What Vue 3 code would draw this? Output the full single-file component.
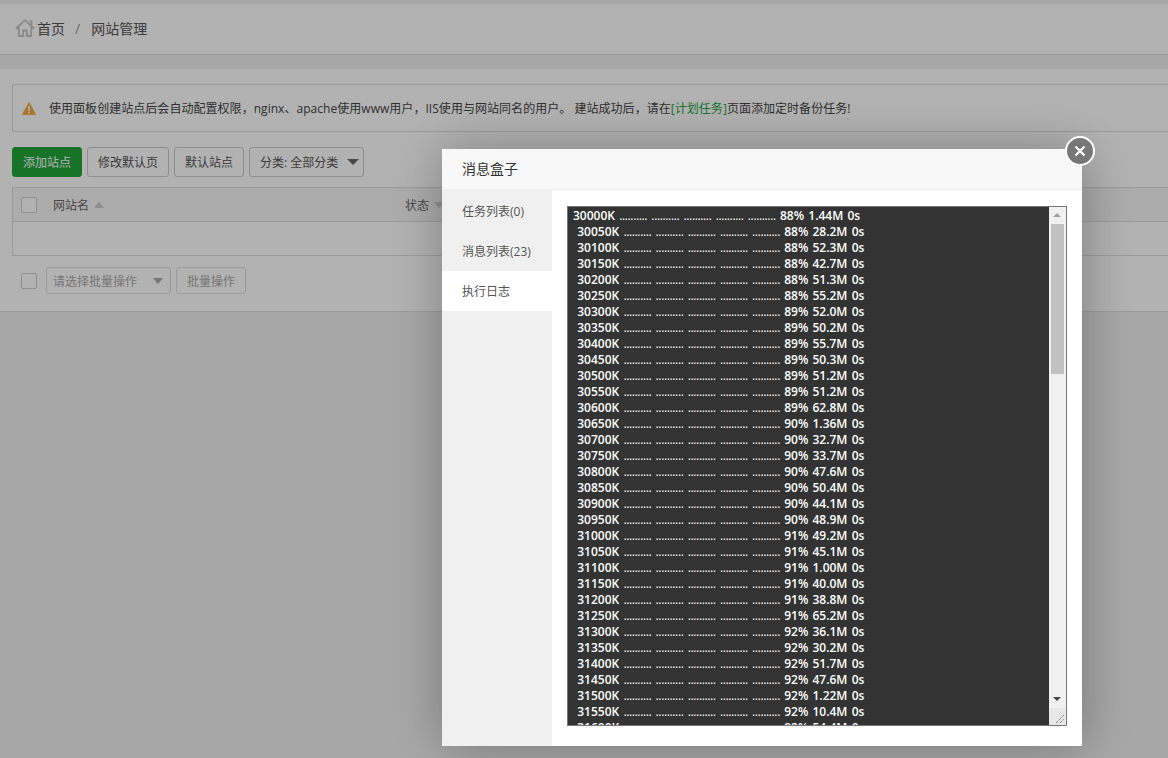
<script setup>
const rows = [
  ['30000K', '88%', '1.44M'], ['30050K', '88%', '28.2M'], ['30100K', '88%', '52.3M'], ['30150K', '88%', '42.7M'],
  ['30200K', '88%', '51.3M'], ['30250K', '88%', '55.2M'], ['30300K', '89%', '52.0M'], ['30350K', '89%', '50.2M'],
  ['30400K', '89%', '55.7M'], ['30450K', '89%', '50.3M'], ['30500K', '89%', '51.2M'], ['30550K', '89%', '51.2M'],
  ['30600K', '89%', '62.8M'], ['30650K', '90%', '1.36M'], ['30700K', '90%', '32.7M'], ['30750K', '90%', '33.7M'],
  ['30800K', '90%', '47.6M'], ['30850K', '90%', '50.4M'], ['30900K', '90%', '44.1M'], ['30950K', '90%', '48.9M'],
  ['31000K', '91%', '49.2M'], ['31050K', '91%', '45.1M'], ['31100K', '91%', '1.00M'], ['31150K', '91%', '40.0M'],
  ['31200K', '91%', '38.8M'], ['31250K', '91%', '65.2M'], ['31300K', '92%', '36.1M'], ['31350K', '92%', '30.2M'],
  ['31400K', '92%', '51.7M'], ['31450K', '92%', '47.6M'], ['31500K', '92%', '1.22M'], ['31550K', '92%', '10.4M'],
  ['31600K', '92%', '54.4M']
]
const dots = '..........'
const tabs = ['任务列表(0)', '消息列表(23)', '执行日志']
</script>

<template>
  <div class="page">
    <header class="crumbs">
      <svg class="home" viewBox="0 0 20 18" width="20" height="18">
        <path d="M1 9.5 10 1.2l9 8.3M3.8 7.5V17h4.4v-5.5h3.6V17h4.4V7.5M14.5 2.5h2v3.4" fill="none" stroke="#c6c6c6" stroke-width="1.8" />
      </svg>
      <span class="crumb">首页</span>
      <span class="sep">/</span>
      <span class="crumb">网站管理</span>
    </header>

    <main class="card">
      <div class="alert">
        <svg class="warn" viewBox="0 0 14 13" width="14" height="13">
          <path d="M7 .5 13.6 12.6H.4z" fill="#f0a63c" stroke="#f0a63c" stroke-width=".8" stroke-linejoin="round" />
          <path d="M6.2 4h1.6v5H6.2zM6.2 9.8h1.6v1.6H6.2z" fill="#fff" />
        </svg>
        <span>使用面板创建站点后会自动配置权限，nginx、apache使用www用户，IIS使用与网站同名的用户。 建站成功后，请在<a class="link">[计划任务]</a>页面添加定时备份任务!</span>
      </div>

      <div class="toolbar">
        <button class="btn primary">添加站点</button>
        <button class="btn">修改默认页</button>
        <button class="btn">默认站点</button>
        <button class="btn category">分类: 全部分类<i class="caret dark"></i></button>
      </div>

      <div class="table">
        <div class="thead">
          <span class="check"></span>
          <span class="col-name">网站名<i class="sort-up"></i></span>
          <span class="col-status">状态<i class="sort-down"></i></span>
        </div>
        <div class="tbody"></div>
      </div>

      <div class="batch">
        <span class="check"></span>
        <div class="batch-select">请选择批量操作<i class="caret"></i></div>
        <button class="btn disabled">批量操作</button>
      </div>
    </main>

    <div class="shade"></div>

    <section class="modal">
      <div class="modal-title">消息盒子</div>
      <div class="modal-body">
        <ul class="tabs">
          <li v-for="(tab, i) in tabs" :key="tab" :class="{ on: i === 2 }">{{ tab }}</li>
        </ul>
        <div class="content">
          <div class="log">
            <pre class="lines"><div v-for="(r, i) in rows" :key="r[0]">{{ i === 0 ? '' : ' ' }}{{ r[0] }} <span class="dots">{{ dots }}</span> <span class="dots">{{ dots }}</span> <span class="dots">{{ dots }}</span> <span class="dots">{{ dots }}</span> <span class="dots">{{ dots }}</span> <span class="pct">{{ r[1] }}</span> {{ r[2] }} 0s</div></pre>
            <div class="scrollbar">
              <i class="arrow up"></i>
              <div class="thumb"></div>
              <i class="arrow down"></i>
              <div class="corner">
                <svg viewBox="0 0 10 10" width="10" height="10">
                  <path d="M1 9 9 1M5 9 9 5" stroke="#5c4a66" stroke-width="1" stroke-dasharray="1 1" fill="none" />
                </svg>
              </div>
            </div>
          </div>
        </div>
      </div>
      <button class="close" aria-label="close">
        <svg viewBox="0 0 12 12" width="12" height="12">
          <path d="M1.5 1.5l9 9M10.5 1.5l-9 9" stroke="#fff" stroke-width="2.2" />
        </svg>
      </button>
    </section>
  </div>
</template>

<style scoped>
.page {
  height: 758px;
  overflow: hidden;
  padding-top: 4px;
  box-sizing: border-box;
  background: #f0f0f0;
  color: #333;
  font-size: 12px;
  font-family: "Open Sans", "Noto Sans CJK SC", sans-serif;
}

.crumbs {
  display: flex;
  align-items: center;
  height: 51px;
  padding: 0 0 2px 15px;
  box-sizing: border-box;
  background: #fff;
  border-bottom: 1px solid #ddd;
  font-size: 14px;
}

.home {
  margin-right: 2px;
}

.crumb {
  color: #555;
}

.sep {
  margin: 0 11px 0 10px;
  color: #999;
}

.card {
  margin-top: 14px;
  padding: 15px 0 17px 12px;
  background: #fff;
  border-bottom: 1px solid #ddd;
  width: 1300px;
}

.alert {
  display: flex;
  align-items: center;
  height: 46px;
  padding-left: 9px;
  border: 1px solid #ddd;
  background: #fff;
  color: #444;
  letter-spacing: 0.04px;
}

.warn {
  margin-right: 13px;
}

.link {
  color: #20a53a;
}

.toolbar {
  display: flex;
  gap: 5px;
  margin-top: 15px;
}

.btn {
  height: 30px;
  padding: 0 10px;
  border: 1px solid #ccc;
  border-radius: 3px;
  background: #fff;
  color: #555;
  font: inherit;
}

.primary {
  width: 70px;
  background: #20a53a;
  border-color: #20a53a;
  color: #fff;
}

.category {
  display: flex;
  align-items: center;
  padding-right: 4px;
}

.caret {
  display: block;
  width: 0;
  height: 0;
  border: 5.5px solid transparent;
  border-bottom: 0;
  border-top: 6px solid #aaa;
}

.caret.dark {
  margin-left: 9px;
  border-width: 6px 6px 0;
  border-top-color: #666;
  border-top-style: solid;
}

.table {
  margin-top: 10px;
  border: 1px solid #ddd;
}

.thead {
  display: flex;
  align-items: center;
  height: 33px;
  padding-left: 8px;
  background: #f6f6f6;
  border-bottom: 1px solid #ddd;
  color: #666;
}

.tbody {
  height: 33px;
}

.check {
  display: block;
  flex: none;
  width: 14px;
  height: 14px;
  border: 1px solid #ccc;
  border-radius: 2px;
  background: #fff;
}

.col-name {
  display: flex;
  align-items: center;
  margin-left: 16px;
}

.col-status {
  display: flex;
  align-items: center;
  margin-left: 301px;
}

.sort-up,
.sort-down {
  width: 0;
  height: 0;
  margin-left: 5px;
  border: 5.5px solid transparent;
  border-top: 0;
  border-bottom: 6px solid #ccc;
}

.sort-down {
  border-top: 6px solid #ccc;
  border-bottom: 0;
}

.batch {
  display: flex;
  align-items: center;
  margin-top: 11px;
  height: 27px;
  padding-left: 9px;
}

.batch-select {
  display: flex;
  align-items: center;
  justify-content: space-between;
  width: 125px;
  height: 27px;
  margin: 0 5px 0 9px;
  padding: 0 7px 0 6px;
  box-sizing: border-box;
  border: 1px solid #ddd;
  border-radius: 3px;
  background: #fff;
  color: #aaa;
}

.disabled {
  width: 70px;
  height: 27px;
  padding: 0;
  border-color: #ddd;
  color: #aaa;
}

.shade {
  position: fixed;
  inset: 0;
  background: rgba(0, 0, 0, 0.3);
}

.modal {
  position: fixed;
  left: 442px;
  top: 149px;
  width: 640px;
  height: 597px;
  display: flex;
  flex-direction: column;
  background: #fff;
  box-shadow: 1px 1px 50px rgba(0, 0, 0, 0.3);
}

.modal-title {
  height: 40px;
  line-height: 40px;
  padding-left: 20px;
  background: #f8f8f8;
  border-bottom: 1px solid #eee;
  font-size: 14px;
  color: #333;
}

.modal-body {
  flex: 1;
  display: flex;
  min-height: 0;
}

.tabs {
  width: 110px;
  margin: 0;
  padding: 0;
  list-style: none;
  background: #f0f0f0;
}

.tabs li {
  height: 40px;
  line-height: 41px;
  padding-left: 20px;
  color: #555;
}

.tabs li:first-child {
  height: 41px;
  line-height: 43px;
}

.tabs li.on {
  background: #fff;
}

.content {
  flex: 1;
  padding: 16px 15px 20px;
  min-width: 0;
}

.log {
  display: flex;
  height: 520px;
  box-sizing: border-box;
  border: 1px solid #777;
  background: #333;
}

.lines {
  flex: 1;
  margin: 0;
  padding: 1px 0 0 5px;
  overflow: hidden;
  color: #fff;
  font: 550 12px/16px "Open Sans", sans-serif;
  white-space: pre;
  word-spacing: 1.1px;
}

.lines > div {
  height: 16px;
}

.dots {
  font-weight: 500;
  letter-spacing: -0.36px;
}

.scrollbar {
  position: relative;
  flex: none;
  width: 17px;
  background: #f0f0f0;
}

.arrow {
  position: absolute;
  left: 4px;
  width: 0;
  height: 0;
  border: 4px solid transparent;
}

.arrow.up {
  top: 6px;
  border-top: 0;
  border-bottom: 4px solid #a0a0a0;
}

.arrow.down {
  bottom: 24px;
  border-bottom: 0;
  border-top: 4px solid #444;
}

.thumb {
  margin: 17px 2px 0;
  height: 150px;
  background: #c1c1c1;
}

.corner {
  position: absolute;
  left: 0;
  right: 0;
  bottom: 0;
  height: 17px;
  background: #e8e8e8;
}

.corner svg {
  position: absolute;
  right: 1px;
  bottom: 1px;
}

.close {
  position: absolute;
  right: -13px;
  top: -13px;
  display: flex;
  align-items: center;
  justify-content: center;
  width: 30px;
  height: 30px;
  padding: 0;
  border: 2.5px solid #fff;
  border-radius: 50%;
  background: #777;
  box-sizing: border-box;
}
</style>
